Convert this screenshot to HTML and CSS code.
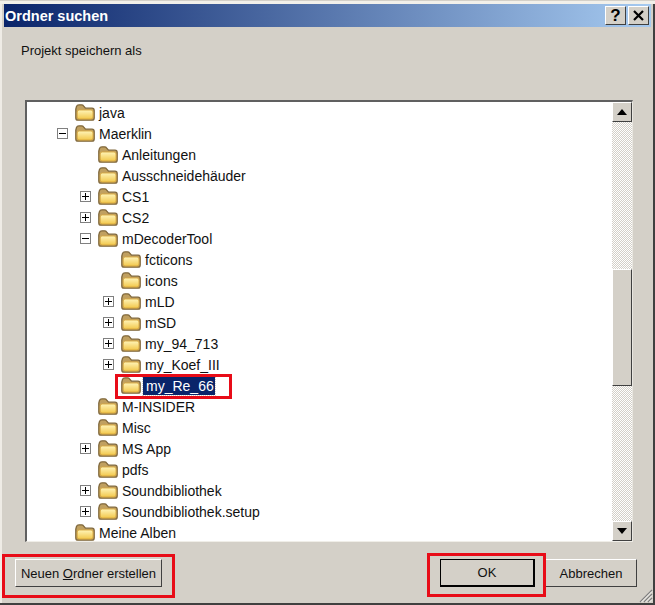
FILE: index.html
```html
<!DOCTYPE html>
<html lang="de">
<head>
<meta charset="utf-8">
<title>Ordner suchen</title>
<link rel="stylesheet" href="styles.css">
</head>
<body>
<svg class="defs" width="0" height="0">
  <defs>
    <linearGradient id="fg" x1="0" y1="0" x2="0" y2="1">
      <stop offset="0" stop-color="#fff4b8"/>
      <stop offset="1" stop-color="#f2c84c"/>
    </linearGradient>
    <symbol id="folder" viewBox="0 0 20 17">
      <path d="M.8 5V14Q.8 16.200 3 16.200H17Q19.200 16.200 19.200 14V6.500Q19.200 4.200 17 4.200H10.500L8.500 1.800Q8 .8 6.500 .8H4Q2 .8 1.500 2.500Z" fill="#c0a060" stroke="#80683c" stroke-width="1.300"/>
      <path d="M2.200 8Q2.200 6 4.200 6H16Q18 6 18 8V13Q18 15 16 15H4.200Q2.200 15 2.200 13Z" fill="url(#fg)" stroke="#d8a840" stroke-width=".9"/>
    </symbol>
  </defs>
</svg>
<div class="window">
  <header class="titlebar">
    <span class="title">Ordner suchen</span>
    <div class="caption-btns">
      <button class="caption-btn">?</button>
      <button class="caption-btn">
        <svg width="13" height="13" viewBox="0 0 13 13"><path d="M2 2L11 11M11 2L2 11" stroke="#000" stroke-width="2.200"/></svg>
      </button>
    </div>
  </header>
  <p class="prompt">Projekt speichern als</p>
  <div class="tree-frame">
    <ul class="tree">
      <li class="row l1"><span class="exp"></span><svg class="fld"><use href="#folder"/></svg><span class="lbl">java</span></li>
      <li class="row l1"><span class="exp"><i class="box minus"></i></span><svg class="fld"><use href="#folder"/></svg><span class="lbl">Maerklin</span></li>
      <li class="row l2"><span class="exp"></span><svg class="fld"><use href="#folder"/></svg><span class="lbl">Anleitungen</span></li>
      <li class="row l2"><span class="exp"></span><svg class="fld"><use href="#folder"/></svg><span class="lbl">Ausschneidehäuder</span></li>
      <li class="row l2"><span class="exp"><i class="box plus"></i></span><svg class="fld"><use href="#folder"/></svg><span class="lbl">CS1</span></li>
      <li class="row l2"><span class="exp"><i class="box plus"></i></span><svg class="fld"><use href="#folder"/></svg><span class="lbl">CS2</span></li>
      <li class="row l2"><span class="exp"><i class="box minus"></i></span><svg class="fld"><use href="#folder"/></svg><span class="lbl">mDecoderTool</span></li>
      <li class="row l3"><span class="exp"></span><svg class="fld"><use href="#folder"/></svg><span class="lbl">fcticons</span></li>
      <li class="row l3"><span class="exp"></span><svg class="fld"><use href="#folder"/></svg><span class="lbl">icons</span></li>
      <li class="row l3"><span class="exp"><i class="box plus"></i></span><svg class="fld"><use href="#folder"/></svg><span class="lbl">mLD</span></li>
      <li class="row l3"><span class="exp"><i class="box plus"></i></span><svg class="fld"><use href="#folder"/></svg><span class="lbl">mSD</span></li>
      <li class="row l3"><span class="exp"><i class="box plus"></i></span><svg class="fld"><use href="#folder"/></svg><span class="lbl">my_94_713</span></li>
      <li class="row l3"><span class="exp"><i class="box plus"></i></span><svg class="fld"><use href="#folder"/></svg><span class="lbl">my_Koef_III</span></li>
      <li class="row l3"><span class="exp"></span><svg class="fld"><use href="#folder"/></svg><span class="lbl selected">my_Re_66</span></li>
      <li class="row l2"><span class="exp"></span><svg class="fld"><use href="#folder"/></svg><span class="lbl">M-INSIDER</span></li>
      <li class="row l2"><span class="exp"></span><svg class="fld"><use href="#folder"/></svg><span class="lbl">Misc</span></li>
      <li class="row l2"><span class="exp"><i class="box plus"></i></span><svg class="fld"><use href="#folder"/></svg><span class="lbl">MS App</span></li>
      <li class="row l2"><span class="exp"></span><svg class="fld"><use href="#folder"/></svg><span class="lbl">pdfs</span></li>
      <li class="row l2"><span class="exp"><i class="box plus"></i></span><svg class="fld"><use href="#folder"/></svg><span class="lbl">Soundbibliothek</span></li>
      <li class="row l2"><span class="exp"><i class="box plus"></i></span><svg class="fld"><use href="#folder"/></svg><span class="lbl">Soundbibliothek.setup</span></li>
      <li class="row l1"><span class="exp"></span><svg class="fld"><use href="#folder"/></svg><span class="lbl">Meine Alben</span></li>
    </ul>
    <div class="scrollbar">
      <button class="sb-btn"><i class="arrow up"></i></button>
      <div class="sb-track"><div class="sb-thumb"></div></div>
      <button class="sb-btn"><i class="arrow down"></i></button>
    </div>
  </div>
  <footer class="actions">
    <button class="btn new"><span>Neuen <u>O</u>rdner erstellen</span></button>
    <div class="right-btns">
      <button class="btn ok"><span>OK</span></button>
      <button class="btn cancel"><span>Abbrechen</span></button>
    </div>
  </footer>
  <svg class="grip" width="15" height="15" viewBox="0 0 15 15"><path d="M14 2L2 14M14 6L6 14M14 10L10 14" stroke="#808080" stroke-width="1.200"/><path d="M14 3.500L3.500 14M14 7.500L7.500 14M14 11.500L11.500 14" stroke="#fff" stroke-width=".8"/></svg>
  <div class="mark mark-sel"></div>
  <div class="mark mark-new"></div>
  <div class="mark mark-ok"></div>
</div>
</body>
</html>
```
FILE: styles.css
```css
* { box-sizing: border-box; }
html, body { margin: 0; padding: 0; }
body { width: 655px; height: 605px; overflow: hidden; background: #d4d0c8; }
.defs { position: absolute; }
.window {
  position: relative;
  width: 655px;
  height: 605px;
  background: #d4d0c8;
  padding: 4px 4px 0 4px;
  border-top: 1px solid #d4d0c8;
  box-shadow: inset 0 3px 0 #f2f0ea, inset -2px 0 0 #404040, inset 0 -2px 0 #404040, inset 2px 0 0 #efece6;
  font-family: "Liberation Sans", sans-serif;
  font-size: 13px;
  color: #111;
  display: flex;
  flex-direction: column;
}
.titlebar {
  height: 23px;
  flex: none;
  margin-top: -1px;
  display: flex;
  align-items: center;
  justify-content: space-between;
  padding: 0 2px 0 1px;
  background: linear-gradient(90deg, #0a246a, #a6caf0);
}
.title { color: #fff; font-weight: 700; font-size: 14.5px; }
.caption-btns { display: flex; gap: 2px; }
.caption-btn {
  width: 21px;
  height: 19px;
  padding: 0;
  display: flex;
  align-items: center;
  justify-content: center;
  background: #d4d0c8;
  border: 1px solid;
  border-color: #fff #404040 #404040 #fff;
  font: 700 17px "Liberation Sans", sans-serif;
  color: #000;
}
.prompt { margin: 15px 0 0 17px; height: 58px; line-height: 18px; }
.tree-frame {
  margin: 0 18px 0 21px;
  width: 608px;
  height: 442px;
  flex: none;
  display: flex;
  background: #fff;
  border-style: solid;
  border-width: 2px 1px 1px 2px;
  border-color: #606060 #e8e6e0 #f0eee8 #606060;
  overflow: hidden;
}
.tree { list-style: none; margin: 0; padding: 0; flex: 1; min-width: 0; font-size: 14px; }
.row { height: 21px; display: flex; align-items: center; }
.l1 { padding-left: 25px; }
.l2 { padding-left: 48px; }
.l3 { padding-left: 71px; }
.exp { width: 23px; flex: none; display: flex; align-items: center; }
.box {
  position: relative;
  display: block;
  width: 11px;
  height: 11px;
  margin-left: 5px;
  border: 1px solid #808080;
  background: #fff;
}
.box::before { content: ""; position: absolute; left: 1px; right: 1px; top: 4px; height: 1px; background: #000; }
.plus::after { content: ""; position: absolute; top: 1px; bottom: 1px; left: 4px; width: 1px; background: #000; }
.fld { width: 20px; height: 17px; flex: none; }
.lbl { margin-left: 2px; padding: 0 2px; line-height: 18px; white-space: nowrap; }
.selected { background: #0a246a; color: #fff; outline: 1px dotted #d4d0c8; width: 72px; padding-left: 3px; }
.scrollbar { width: 20px; flex: none; display: flex; flex-direction: column; }
.sb-btn {
  height: 20px;
  flex: none;
  padding: 0;
  background: #d4d0c8;
  border: 1px solid;
  border-color: #fff #404040 #404040 #fff;
  display: flex;
  align-items: center;
  justify-content: center;
}
.arrow { display: block; width: 0; height: 0; border-left: 5.5px solid transparent; border-right: 5.5px solid transparent; }
.up { border-bottom: 6px solid #000; }
.down { border-top: 6px solid #000; }
.sb-track {
  flex: 1;
  min-height: 0;
  padding-top: 147px;
  background-color: #fff;
  background-image: conic-gradient(#d4d0c8 25%, #fff 0 50%, #d4d0c8 0 75%, #fff 0);
  background-size: 2px 2px;
}
.sb-thumb {
  height: 117px;
  background: #d4d0c8;
  border: 1px solid;
  border-color: #fff #404040 #404040 #fff;
}
.actions {
  margin: 17px 14px 0 11px;
  display: flex;
  justify-content: space-between;
}
.right-btns { display: flex; gap: 10px; }
.btn {
  height: 28px;
  padding: 0;
  background: #d4d0c8;
  border: 1px solid;
  border-color: #fff #404040 #404040 #fff;
  font: 13px "Liberation Sans", sans-serif;
  white-space: nowrap;
  color: #111;
}
.new { width: 147px; }
.ok { width: 95px; border: 1px solid #000; border-bottom-width: 2px; border-right-width: 2px; }
.cancel { width: 92px; }
.grip { position: absolute; right: 2px; bottom: 2px; }
.mark { position: absolute; border: 3px solid #e80c18; pointer-events: none; }
.mark-sel { left: 115px; top: 373px; width: 117px; height: 25px; }
.mark-new { left: 2px; top: 553px; width: 173px; height: 44px; }
.mark-ok { left: 427px; top: 552px; width: 119px; height: 44px; }
```
